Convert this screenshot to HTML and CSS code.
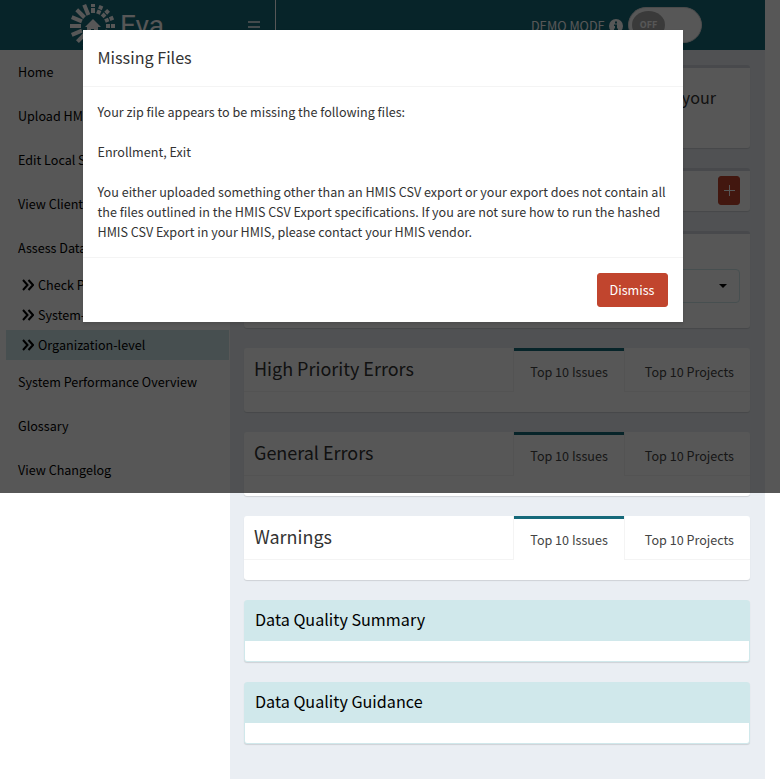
FILE: index.html
```html
<!DOCTYPE html>
<html lang="en">
<head>
<meta charset="utf-8">
<title>Eva</title>
<link rel="stylesheet" href="styles.css">
</head>
<body>
<div class="app">
  <header class="topbar">
    <div class="brand">
      <svg class="brand-sun" width="46" height="46" viewBox="-23 -23 46 46" aria-hidden="true">
        <g stroke="#fff" stroke-width="4">
          <path d="M0-13V-22" stroke-dasharray="5 1 3"/>
          <path d="M0-13V-22" stroke-dasharray="4 1 4" transform="rotate(22.5)"/>
          <path d="M0-13V-22" stroke-dasharray="4 1 4" transform="rotate(45)"/>
          <path d="M0-13V-22" stroke-dasharray="4 1 4" transform="rotate(67.5)"/>
          <path d="M0-13V-22" stroke-dasharray="4 1 4" transform="rotate(90)"/>
          <path d="M0-13V-22" transform="rotate(112.5)"/>
          <path d="M0-13V-22" transform="rotate(135)"/>
          <path d="M0-13V-22" transform="rotate(157.5)"/>
          <path d="M0-13V-22" transform="rotate(180)"/>
          <path d="M0-13V-22" transform="rotate(202.5)"/>
          <path d="M0-12V-22" transform="rotate(225)"/>
          <path d="M0-12V-23" transform="rotate(247.5)"/>
          <path d="M0-12V-23" transform="rotate(270)"/>
          <path d="M0-12V-23" transform="rotate(292.5)"/>
          <path d="M0-12V-23" transform="rotate(315)"/>
          <path d="M0-12V-23" transform="rotate(337.5)"/>
        </g>
        <path fill="#fff" d="M0-7 8 1H5V8H1V3H-2V8H-6V1H-8Z"/>
      </svg>
      <span class="brand-name">Eva</span>
    </div>
    <button class="menu-button" aria-label="Toggle navigation">
      <svg width="12" height="12" viewBox="0 0 12 12" aria-hidden="true"><path d="M0 1H12M0 6H12M0 11H12" stroke="#fff" stroke-width="1.500"/></svg>
    </button>
    <div class="demo">
      <label for="demo-switch">DEMO MODE</label>
      <svg class="info" width="14" height="14" viewBox="0 0 14 14" aria-hidden="true"><circle cx="7" cy="7" r="7" fill="#fff"/><path fill="#16697a" d="M6 2.500H8V4.500H6ZM5 5.500H8V9.500H9V11H5V9.500H6V7H5Z"/></svg>
      <span class="switch">
        <input type="checkbox" id="demo-switch">
        <span class="knob">OFF</span>
      </span>
    </div>
  </header>

  <div class="columns">
    <nav class="sidebar">
      <a href="#">Home</a>
      <a href="#">Upload HMIS</a>
      <a href="#">Edit Local Set</a>
      <a href="#">View Client</a>
      <a href="#">Assess Data</a>
      <a class="sub" href="#"><svg width="12" height="12" viewBox="0 0 12 12" aria-hidden="true"><path d="M1 1 5.500 6 1 11M6.500 1 11 6 6.500 11"/></svg>Check Project</a>
      <a class="sub" href="#"><svg width="12" height="12" viewBox="0 0 12 12" aria-hidden="true"><path d="M1 1 5.500 6 1 11M6.500 1 11 6 6.500 11"/></svg>System-level</a>
      <a class="sub active" href="#"><svg width="12" height="12" viewBox="0 0 12 12" aria-hidden="true"><path d="M1 1 5.500 6 1 11M6.500 1 11 6 6.500 11"/></svg>Organization-level</a>
      <a href="#">System Performance Overview</a>
      <a href="#">Glossary</a>
      <a href="#">View Changelog</a>
    </nav>

    <main class="content">
      <section class="box lined intro"><p>your</p></section>
      <section class="box lined tools"><button class="btn plus" aria-label="Expand"><svg width="11" height="11" viewBox="0 0 11 11" aria-hidden="true"><path d="M5.500 0V11M0 5.500H11" stroke="#fff"/></svg></button></section>
      <section class="box lined picker">
        <div class="select-wrap">
          <select aria-label="Organization"><option></option></select>
          <svg class="caret" width="8" height="4" viewBox="0 0 8 4" aria-hidden="true"><path d="M0 0H8L4 4Z"/></svg>
        </div>
      </section>

      <section class="box">
        <div class="tabs"><h3>High Priority Errors</h3><a class="tab on" href="#">Top 10 Issues</a><a class="tab" href="#">Top 10 Projects</a></div>
        <div class="empty"></div>
      </section>
      <section class="box">
        <div class="tabs"><h3>General Errors</h3><a class="tab on" href="#">Top 10 Issues</a><a class="tab" href="#">Top 10 Projects</a></div>
        <div class="empty"></div>
      </section>
      <section class="box">
        <div class="tabs"><h3>Warnings</h3><a class="tab on" href="#">Top 10 Issues</a><a class="tab" href="#">Top 10 Projects</a></div>
        <div class="empty"></div>
      </section>
      <section class="box solid"><h3>Data Quality Summary</h3><div class="empty"></div></section>
      <section class="box solid"><h3>Data Quality Guidance</h3><div class="empty"></div></section>
    </main>
  </div>
</div>

<div class="backdrop">
  <div class="modal" role="dialog" aria-labelledby="modal-title">
    <h4 class="modal-title" id="modal-title">Missing Files</h4>
    <div class="modal-body">
      <p>Your zip file appears to be missing the following files:</p>
      <p>Enrollment, Exit</p>
      <p>You either uploaded something other than an HMIS CSV export or your export does not contain all the files outlined in the HMIS CSV Export specifications. If you are not sure how to run the hashed HMIS CSV Export in your HMIS, please contact your HMIS vendor.</p>
    </div>
    <div class="modal-footer"><button class="btn">Dismiss</button></div>
  </div>
</div>
</body>
</html>
```
FILE: styles.css
```css
* { box-sizing: border-box; }
body {
  margin: 0;
  position: relative;
  background: #fff;
  color: #333;
  font: 14px/20px "Noto Sans CJK SC", "Noto Sans", sans-serif;
  font-size-adjust: 0.488;
}
h3, h4, p { margin: 0; font-weight: 400; }
a { color: inherit; text-decoration: none; }
button, select { font: inherit; font-size-adjust: inherit; }

.app { margin-right: 15px; min-height: 100vh; display: flex; flex-direction: column; }
.topbar { height: 50px; display: flex; background: #16697a; color: #fff; }
.brand { width: 230px; padding: 2px 0 0 4px; display: flex; justify-content: center; align-items: center; gap: 4px; }
.brand-name { font: 28px/32px Roboto, sans-serif; }
.menu-button {
  width: 46px;
  padding: 0 0 0 3px;
  border: 0;
  border-right: 1px solid #fff;
  background: none;
}
.menu-button svg { vertical-align: middle; }
.demo { margin-left: auto; padding-right: 63px; display: flex; align-items: center; }
.demo label { padding-top: 2px; }
.info { margin: 2px 5px 0 4px; }
.switch { position: relative; width: 74px; height: 36px; }
.switch input {
  appearance: none;
  width: 100%;
  height: 100%;
  margin: 0;
  border: 1px solid #ddd;
  border-radius: 18px;
  background: #fff;
}
.knob {
  position: absolute;
  top: 4px;
  left: 4px;
  width: 33px;
  height: 28px;
  border-radius: 50%;
  background: #aaa;
  font-size: 10px;
  font-weight: 700;
  line-height: 28px;
  text-align: center;
  pointer-events: none;
}

.columns { flex: 1; display: flex; }
.sidebar { width: 230px; flex: none; color: #000; }
.sidebar a { display: block; padding: 12px 18px; white-space: nowrap; overflow: hidden; }
.sidebar .sub { display: flex; align-items: center; gap: 4px; margin: 0 1px 0 6px; padding: 5px 16px; }
.sidebar .active { background: #d0e8eb; }
.sub svg { fill: none; stroke: #000; stroke-width: 2; }

.content {
  flex: 1;
  min-width: 0;
  padding: 15px 15px 35px 14px;
  display: flex;
  flex-direction: column;
  gap: 20px;
  background: #eaeef3;
}
.box { border-radius: 3px; background: #fff; box-shadow: 0 1px 1px rgba(0, 0, 0, .12); }
.lined { border-top: 3px solid #d2d6de; }
.intro { padding: 19px 34px 41px; text-align: right; font-size: 18px; }
.tools { padding: 5px 10px 6px; display: flex; justify-content: flex-end; }
.picker { padding: 35px 10px 25px; }
.select-wrap { position: relative; height: 34px; }
.select-wrap select {
  appearance: none;
  width: 100%;
  height: 100%;
  border: 1px solid #d0e8eb;
  border-radius: 4px;
  background: #fff;
}
.caret { position: absolute; top: 15px; right: 13px; pointer-events: none; }
.tabs { display: flex; height: 44px; }
.tabs h3 { flex: 1; padding: 10px; border-bottom: 1px solid #f4f4f4; font-size: 20px; }
.tab { padding: 14px 16px; border-bottom: 1px solid #f4f4f4; color: #444; }
.tab:last-child { padding-left: 20px; }
.tab.on {
  border: 1px solid #f4f4f4;
  border-width: 0 1px;
  box-shadow: inset 0 3px #16697a;
}
.empty { height: 20px; }
.solid { border: 1px solid #d0e8eb; }
.solid h3 { padding: 8px 10px 12px; background: #d0e8eb; color: #000; font-size: 18px; }

.btn { height: 34px; padding: 0 12px; border: 1px solid #c1452e; border-radius: 3px; background: #c1452e; color: #fff; }
.plus { width: 22px; height: 29px; padding: 0; }
.backdrop {
  position: absolute;
  top: 0;
  left: 0;
  width: 100%;
  height: 493px;
  padding: 30px 15px 0 0;
  background: rgba(0, 0, 0, .66);
}
.modal { max-width: 600px; margin: 0 auto; background: #fff; box-shadow: 0 2px 3px rgba(0, 0, 0, .12); }
.modal-title { padding: 15px 15px 16px; border-bottom: 1px solid #f4f4f4; font-size: 18px; line-height: 25px; }
.modal-body { padding: 15px; display: grid; gap: 20px; }
.modal-footer { padding: 15px; border-top: 1px solid #f4f4f4; text-align: right; }
.modal-footer .btn { display: inline-block; vertical-align: top; }
```
